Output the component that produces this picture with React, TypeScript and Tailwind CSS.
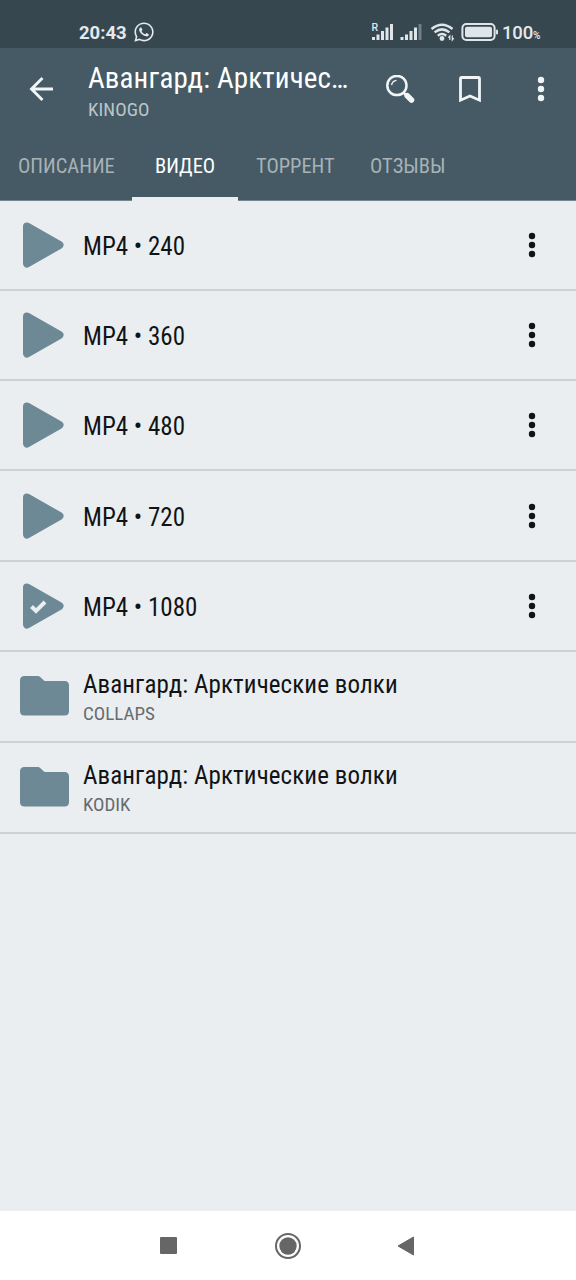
import type { ReactNode } from "react";
import { FaWhatsapp } from "react-icons/fa";

type TextProps = { className?: string; children: ReactNode };

function Label({ className = "", children }: TextProps) {
  return (
    <span className={`block w-max whitespace-nowrap [font-stretch:75%] ${className}`}>
      {children}
    </span>
  );
}

function Dots({ className }: { className: string }) {
  return (
    <svg viewBox="0 0 8 26" className={className} fill="currentColor">
      <circle cx="4" cy="4" r="3.2" />
      <circle cx="4" cy="13" r="3.2" />
      <circle cx="4" cy="22" r="3.2" />
    </svg>
  );
}

function PlayIcon({ checked }: { checked?: boolean }) {
  return (
    <svg viewBox="0 0 42 46" className="h-[46px] w-[42px]">
      <path
        d="M4 4.5 36.5 23 4 41.5Z"
        fill="#6c8995"
        stroke="#6c8995"
        strokeWidth="8"
        strokeLinejoin="round"
      />
      {checked && <path d="m8.500 23.500 4.500 4.500 9-9" fill="none" stroke="#eaeef1" strokeWidth="4" />}
    </svg>
  );
}

function FolderIcon() {
  return (
    <svg viewBox="0 0 49 40" className="h-[40px] w-[49px]" fill="#6c8995">
      <path d="M4.500 0H18q1.300 0 2.200.9L24.500 5H44.500q4.500 0 4.500 4.500V35q0 4.500-4.500 4.500H4.500Q0 39.500 0 35V4.500Q0 0 4.500 0Z" />
    </svg>
  );
}

function StatusBar() {
  return (
    <div className="flex h-12 items-start bg-[#37474f] pl-[79px] text-[#e3eaee]">
      <div className="mt-[20px] w-[54px] text-[18.5px] leading-[26px] font-bold">20:43</div>
      <FaWhatsapp className="mt-[21px] h-[22px] w-[22px]" />
      <svg viewBox="0 0 170 30" className="mt-[17px] ml-[216px] h-[30px] w-[170px]">
        <g fill="#dfe6ea">
          <path d="M1 23h3v-3H1zM5.500 23h3v-5.500h-3zM10 23h3v-9h-3zM14.500 23h3V10.500h-3zM19 23h3V7h-3z" />
          <path d="M29.500 23h3v-3h-3zM34 23h3v-5.500h-3zM38.500 23h3v-9h-3zM43 23h3V10.500h-3z" />
          <path opacity=".35" d="M47.500 23h3V7h-3z" />
          <circle cx="71" cy="21.500" r="2.400" />
          <rect x="94" y="9.800" width="27" height="10.400" rx="2" />
          <rect x="125" y="12.500" width="2" height="5" rx="1" />
        </g>
        <text x="0.500" y="13.500" fontSize="10.500" fontWeight="500" fill="#dfe6ea">R</text>
        <g fill="none" stroke="#dfe6ea" strokeWidth="2.500">
          <path d="M60.500 12q10.500-8.500 21 0M63.600 15.400q7.400-6 14.800 0M66.800 18.700q4.200-3.400 8.400 0" />
          <path strokeWidth="1.200" d="M78.800 23v-4l-1.500 1.700M81.300 18.500v4.500l1.500-1.800" />
          <rect x="91.400" y="7.100" width="32.200" height="15.800" rx="4" strokeWidth="2" />
        </g>
      </svg>
      <div className="mt-[20px] -ml-[39px] flex items-baseline leading-[26px]">
        <span className="text-[18.5px] font-medium tracking-[-0.15px]">100</span>
        <span className="text-[10px] font-medium">%</span>
      </div>
    </div>
  );
}

function AppBar() {
  return (
    <header className="h-[153px] border-b border-[#77858c] bg-[#455a64] text-white">
      <div className="flex h-[83px] items-start">
        <svg viewBox="0 0 26 26" className="mt-[28px] ml-[28px] h-[26px] w-[26px]" fill="none" stroke="#f1f5f6" strokeWidth="2.900">
          <path d="M25 13H4M14.500 2 3.500 13l11 11" />
        </svg>
        <div className="ml-[34px] w-[298px] pt-[12px]">
          <Label className="text-[29px] leading-[36px] tracking-[0.13px]">Авангард: Арктичес…</Label>
          <Label className="text-[19px] leading-[28px] tracking-[0.1px] text-[#bcc5ca]">KINOGO</Label>
        </div>
        <svg viewBox="0 0 30 30" className="mt-[27px] h-[30px] w-[30px]" fill="none" stroke="#f1f5f6">
          <circle cx="10.900" cy="10.500" r="9.600" strokeWidth="2.500" />
          <path d="M5.500 10a6 6 0 0 1 5-4.600" strokeWidth="1.400" />
          <path d="m17.500 17.500 3 3" strokeWidth="2.500" />
          <path d="m21.200 20.700 4.300 4.300" strokeWidth="5.600" strokeLinecap="round" />
        </svg>
        <svg viewBox="0 0 22 27" className="mt-[28px] ml-[43px] h-[27px] w-[22px]" fill="none" stroke="#f1f5f6" strokeWidth="2.800">
          <path d="M1.500 24.200V2.500q0-1 1-1h17q1 0 1 1v21.700L11 20Z" />
        </svg>
        <Dots className="mt-[28px] ml-[56px] h-[26px] w-2 text-[#f1f5f6]" />
      </div>
      <nav className="flex h-[70px] text-[20.5px] leading-[71px] text-[#a8b2b7]">
        <div className="w-[132px] pl-[18px]"><Label>ОПИСАНИЕ</Label></div>
        <div className="h-[70px] w-[106px] border-b-4 border-[#eaeef1] pl-[23px] text-white"><Label>ВИДЕО</Label></div>
        <div className="w-[114px] pl-[18px]"><Label>ТОРРЕНТ</Label></div>
        <div className="pl-[18px]"><Label>ОТЗЫВЫ</Label></div>
      </nav>
    </header>
  );
}

const videos = ["240", "360", "480", "720", "1080"];
const folders = ["COLLAPS", "KODIK"];

export default function App() {
  return (
    <div className="flex h-[1280px] w-[576px] flex-col overflow-hidden bg-[#eaeef1] font-[Roboto,sans-serif]">
      <StatusBar />
      <AppBar />
      <main className="flex-1 text-[#111416]">
        {videos.map((v) => (
          <div key={v} className="flex h-[90.16px] items-center border-b-2 border-[#ccd1d5] pr-[40px] pl-[23px]">
            <PlayIcon checked={v === "1080"} />
            <div className="ml-[18px] flex-1 pt-[4px]"><Label className="text-[25px] leading-8">MP4 • {v}</Label></div>
            <Dots className="h-[26px] w-2" />
          </div>
        ))}
        {folders.map((f) => (
          <div key={f} className="flex h-[91px] items-center border-b-2 border-[#ccd1d5] pl-5">
            <FolderIcon />
            <div className="ml-[14px] pt-[4px]">
              <Label className="text-[25px] leading-8 tracking-[0.1px]">Авангард: Арктические волки</Label>
              <Label className="text-[19px] leading-[26px] text-[#666b6e]">{f}</Label>
            </div>
          </div>
        ))}
      </main>
      <footer className="flex h-[69px] items-center bg-white pl-[160px]">
        <div className="h-[17px] w-[17px] rounded-[1px] bg-[#666]" />
        <svg viewBox="0 0 26 26" className="ml-[98px] h-[26px] w-[26px]">
          <circle cx="13" cy="13" r="12" fill="none" stroke="#666" strokeWidth="2" />
          <circle cx="13" cy="13" r="8.700" fill="#666" />
        </svg>
        <svg viewBox="0 0 17 20" className="ml-[96px] h-[20px] w-[17px]" fill="#666" stroke="#666" strokeLinejoin="round">
          <path d="M1 10 16.500 1v18Z" />
        </svg>
      </footer>
    </div>
  );
}
